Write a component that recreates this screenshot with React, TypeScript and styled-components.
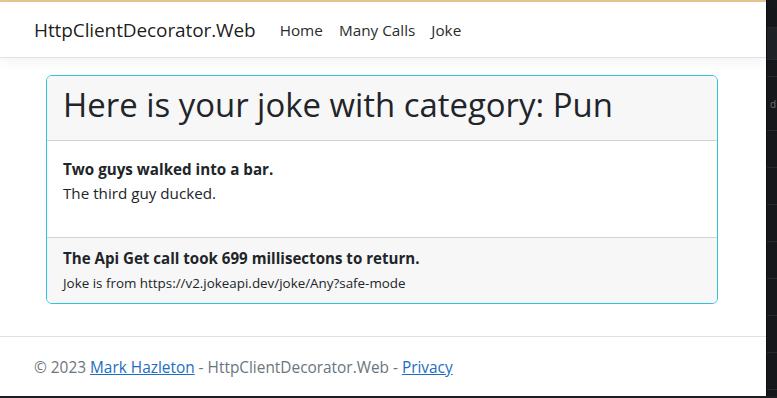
import React from "react";
import styled, { createGlobalStyle } from "styled-components";

const GlobalStyle = createGlobalStyle`
  html, body {
    margin: 0;
    padding: 0;
    background: #ffffff;
  }
  body {
    font-family: "Open Sans", "Noto Sans", sans-serif;
    color: #212529;
    font-size: 16px;
    line-height: 24px;
  }
`;

const Screen = styled.div`
  width: 777px;
  height: 398px;
  display: flex;
  flex-direction: column;
  overflow: hidden;
`;

const Window = styled.div`
  flex: 1;
  display: flex;
  min-height: 0;
`;

const BottomEdge = styled.div`
  height: 2px;
  background: #1c1e22;
`;

const Page = styled.div`
  width: 766px;
  display: flex;
  flex-direction: column;
  background: #ffffff;
`;

const TopAccent = styled.div`
  height: 2px;
  background: #e9c593;
`;

const Navbar = styled.nav`
  height: 55px;
  display: flex;
  align-items: center;
  padding: 0 34px;
  border-bottom: 1px solid #dee2e6;
  box-shadow: 0 4px 12px rgba(0, 0, 0, 0.05);
  position: relative;
  z-index: 1;
`;

const Brand = styled.a`
  font-size: 19px;
  line-height: 30px;
  color: rgba(0, 0, 0, 0.9);
  text-decoration: none;
  margin-right: 16px;
  letter-spacing: -0.1px;
`;

const NavList = styled.div`
  display: flex;
`;

const NavLink = styled.a`
  font-size: 15.3px;
  padding: 8px;
  color: #2b2b2b;
  text-decoration: none;
`;

const Main = styled.main`
  flex: 1;
  padding: 17px 48px 0 46px;
`;

const Card = styled.section`
  border: 1px solid #2fc3df;
  border-radius: 6px;
  overflow: hidden;
`;

const CardHeader = styled.header`
  background: #f7f7f7;
  padding: 9px 16px 15px;
  border-bottom: 1px solid #d2d2d2;
`;

const Title = styled.h1`
  margin: 0;
  font-size: 32.9px;
  font-weight: 500;
  line-height: 40px;
  color: #212529;
`;

const CardBody = styled.div`
  padding: 16px;
`;

const Paragraph = styled.p`
  margin: 0 0 16px;
  font-size: 15.2px;
`;

const Strong = styled.strong`
  display: block;
  font-weight: 700;
`;

const CardFooter = styled.footer`
  background: #f7f7f7;
  padding: 8px 16px;
  border-top: 1px solid #d2d2d2;
  font-size: 15.1px;
`;

const Small = styled.small`
  font-size: 13.4px;
`;

const PageFooter = styled.footer`
  border-top: 1px solid #dee2e6;
  height: 59px;
  line-height: 61px;
  padding: 0 34px;
  color: #6c757d;
  font-size: 15.4px;
`;

const FooterLink = styled.a`
  color: #1b6ec2;
  text-decoration: underline;
`;

const Strip = styled.aside`
  flex: 1;
  background: #15171b;
  display: flex;
  flex-direction: column;
  border-left: 1px solid #0c0d10;
`;

const StripRow = styled.div<{ $h: number; $light?: boolean }>`
  height: ${(p) => p.$h}px;
  flex-shrink: 0;
  background: ${(p) => (p.$light ? "#1f2227" : "transparent")};
  border-bottom: 1px solid #262a30;
  box-sizing: border-box;
  color: #6d7178;
  font-size: 10px;
  line-height: 10px;
  display: flex;
  align-items: center;
  overflow: hidden;
  white-space: nowrap;
`;

const Cut = styled.span`
  margin-left: 3px;
`;

const stripRows = [28, 32, 17, 54, 37, 37, 37, 37, 37, 37, 37];

export default function App() {
  return (
    <Screen>
      <GlobalStyle />
      <Window>
        <Page>
          <TopAccent />
          <Navbar>
            <Brand href="#">HttpClientDecorator.Web</Brand>
            <NavList>
              <NavLink href="#">Home</NavLink>
              <NavLink href="#">Many Calls</NavLink>
              <NavLink href="#">Joke</NavLink>
            </NavList>
          </Navbar>
          <Main>
            <Card>
              <CardHeader>
                <Title>Here is your joke with category: Pun</Title>
              </CardHeader>
              <CardBody>
                <Paragraph>
                  <Strong>Two guys walked into a bar.</Strong>
                  The third guy ducked.
                </Paragraph>
              </CardBody>
              <CardFooter>
                <Strong>The Api Get call took 699 millisectons to return.</Strong>
                <Small>Joke is from https://v2.jokeapi.dev/joke/Any?safe-mode</Small>
              </CardFooter>
            </Card>
          </Main>
          <PageFooter>
            &copy; 2023 <FooterLink href="#">Mark Hazleton</FooterLink> - HttpClientDecorator.Web -{" "}
            <FooterLink href="#">Privacy</FooterLink>
          </PageFooter>
        </Page>
        <Strip>
          {stripRows.map((h, i) => (
            <StripRow key={i} $h={h} $light={i === 1}>
              {i === 3 ? <Cut>d</Cut> : null}
            </StripRow>
          ))}
        </Strip>
      </Window>
      <BottomEdge />
    </Screen>
  );
}
